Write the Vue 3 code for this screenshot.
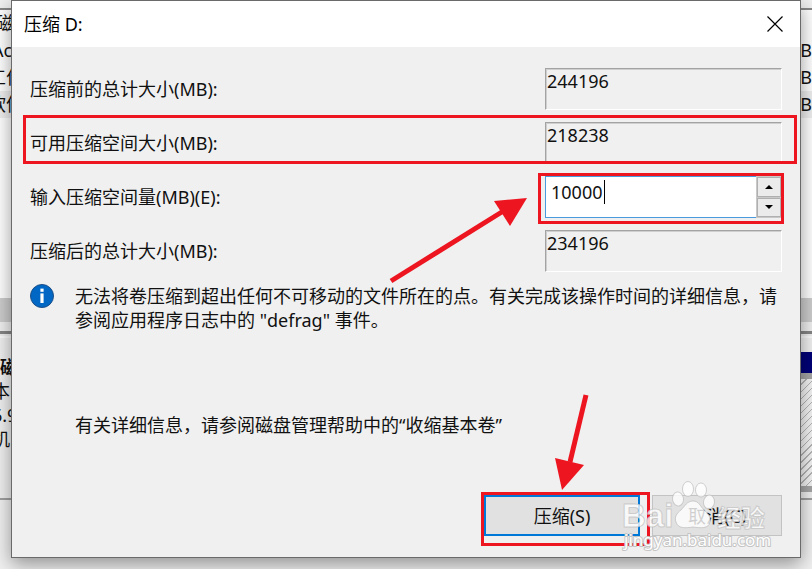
<script setup>
import { ref, computed } from 'vue'

const total = 244196
const available = 218238
const amount = ref('10000')
const remaining = computed(() => total - (Number(amount.value) || 0))

const step = (delta) => {
  const next = (Number(amount.value) || 0) + delta
  amount.value = String(Math.min(available, Math.max(0, next)))
}
</script>

<template>
  <div class="desktop">
    <div class="backdrop" aria-hidden="true">
      <div class="toolbar"></div>
      <div class="volumes">
        <div class="volume head"><span class="shift-s">磁</span></div>
        <div class="volume"><span class="shift-m">Ac</span><span>B</span></div>
        <div class="volume"><span class="shift-l">工作</span><span>B</span></div>
        <div class="volume picked"><span class="shift-l">软件</span><span>B</span></div>
      </div>
      <div class="scroll"></div>
      <div class="splitter"></div>
      <div class="disks">
        <div class="disk-info">
          <b>磁</b>
          <span class="shift-m">本</span>
          <span class="shift-m">6.9</span>
          <span class="shift-m">机</span>
        </div>
        <div class="disk-map">
          <div class="navy"></div>
          <div class="hatch"></div>
        </div>
      </div>
    </div>

    <main class="dialog" role="dialog" aria-labelledby="dialog-title">
      <header class="titlebar">
        <h1 id="dialog-title">压缩 D:</h1>
        <button class="close" type="button" aria-label="关闭">
          <svg width="16" height="16" viewBox="0 0 16 16">
            <path d="M0.5 0.5L15.5 15.5M15.5 0.5L0.5 15.5" stroke="#000" stroke-width="1.2" />
          </svg>
        </button>
      </header>

      <form class="content" @submit.prevent>
        <div class="fields">
          <div class="row">
            <label for="total">压缩前的总计大小(MB):</label>
            <output id="total" class="sunken">{{ total }}</output>
          </div>
          <div class="row">
            <label for="available">可用压缩空间大小(MB):</label>
            <output id="available" class="sunken">{{ available }}</output>
            <i class="mark mark-row"></i>
          </div>
          <div class="row">
            <label for="amount">输入压缩空间量(MB)(E):</label>
            <div class="spin">
              <div class="edit">
                <input id="amount" v-model="amount" type="text" inputmode="numeric" />
                <i class="caret"></i>
              </div>
              <div class="steps">
                <button type="button" aria-label="增加" @click="step(1)">
                  <svg width="8" height="4" viewBox="0 0 8 4"><path d="M0 4L4 0L8 4Z" /></svg>
                </button>
                <button type="button" aria-label="减少" @click="step(-1)">
                  <svg width="8" height="4" viewBox="0 0 8 4"><path d="M0 0L4 4L8 0Z" /></svg>
                </button>
              </div>
              <i class="mark mark-spin"></i>
            </div>
          </div>
          <div class="row">
            <label for="remaining">压缩后的总计大小(MB):</label>
            <output id="remaining" class="sunken">{{ remaining }}</output>
          </div>
        </div>

        <div class="notice">
          <svg class="info" width="24" height="24" viewBox="0 0 24 24">
            <circle cx="12" cy="12" r="11.5" fill="#0067c5" stroke="#1c4f87" />
            <rect x="10.4" y="4.6" width="3.2" height="3.2" fill="#fff" />
            <rect x="10.4" y="9.4" width="3.2" height="9.6" fill="#fff" />
          </svg>
          <p>无法将卷压缩到超出任何不可移动的文件所在的点。有关完成该操作时间的详细信息，请参阅应用程序日志中的 "defrag" 事件。</p>
        </div>

        <p class="more">有关详细信息，请参阅磁盘管理帮助中的“收缩基本卷”</p>

        <footer class="actions">
          <div class="primary">
            <button class="btn default" type="submit">压缩(S)</button>
            <i class="mark mark-button"></i>
          </div>
          <button class="btn cancel" type="button">取消(C)</button>
        </footer>
      </form>

      <svg class="arrow arrow-input" width="138" height="88" viewBox="0 0 138 88">
        <path d="M2 84L116 13" stroke="#ed1520" stroke-width="5" />
        <path d="M105 4L138 1L121 29Z" fill="#ed1520" />
      </svg>
      <svg class="arrow arrow-button" width="36" height="98" viewBox="0 0 36 98">
        <path d="M31 1L15 68" stroke="#ed1520" stroke-width="5" />
        <path d="M0 64L29 71L7 96Z" fill="#ed1520" />
      </svg>

      <svg class="watermark" width="160" height="76" viewBox="0 0 160 76">
        <g fill="#fff" fill-opacity="0.8" stroke="#b4b4b4" stroke-opacity="0.6" stroke-width="1">
          <text class="wm-name" x="4" y="47">Bai</text>
          <text class="wm-cjk" x="99" y="47">经验</text>
          <ellipse cx="70" cy="9" rx="5.5" ry="7.5" />
          <ellipse cx="83" cy="10" rx="5.5" ry="7" />
          <ellipse cx="60" cy="19" rx="5.5" ry="7" transform="rotate(-8 60 19)" />
          <ellipse cx="91" cy="22" rx="5.5" ry="7" transform="rotate(8 91 22)" />
          <path d="M75 21C69 21 67 26 63 30C59 33 56 37 58 42C60 49 68 48 75 47C82 48 91 49 92 42C93 37 90 34 86 30C82 26 81 21 75 21Z" />
        </g>
        <text class="wm-url" x="6" y="66">jingyan.baidu.com</text>
      </svg>
    </main>
  </div>
</template>

<style>
body {
  margin: 0;
  background: #f0f0f0;
}
</style>

<style scoped>
* {
  box-sizing: border-box;
}
.desktop {
  position: relative;
  min-height: 100vh;
  padding: 0 11px 11px;
  overflow: hidden;
  background: #f0f0f0;
  color: #111;
  font: 18px/24px "Noto Sans", "Noto Sans CJK SC", sans-serif;
}
.backdrop {
  position: absolute;
  inset: 0;
  display: flex;
  flex-direction: column;
}
.toolbar {
  height: 10px;
  border-bottom: 2px solid #888;
}
.volumes {
  height: 288px;
  background: #fff;
}
.volume {
  display: flex;
  justify-content: space-between;
  height: 27px;
  line-height: 26px;
  white-space: nowrap;
}
.picked {
  background: #efefef;
}
.shift-s {
  margin-left: -4px;
}
.shift-m {
  margin-left: -8px;
}
.shift-l {
  margin-left: -12px;
}
.scroll {
  height: 24px;
  background: #cdcdcd;
}
.splitter {
  height: 12px;
  border-bottom: 3px solid #858585;
}
.disks {
  display: flex;
  justify-content: space-between;
  height: 164px;
  margin-top: 2px;
  padding-top: 14px;
  border-top: 2px solid #fafafa;
  border-bottom: 2px solid #a0a0a0;
}
.disk-info {
  display: flex;
  flex-direction: column;
  padding-top: 3px;
}
.disk-map {
  width: 40px;
}
.navy {
  height: 27px;
  border-bottom: 6px solid #a6a6a6;
  background: #000078;
}
.hatch {
  height: 113px;
  border-bottom: 6px solid #a6a6a6;
  background: repeating-linear-gradient(135deg, #f4f4f4 0 4px, #b4b4b4 4px 5px);
}
.dialog {
  position: relative;
  display: flex;
  flex-direction: column;
  min-height: calc(100vh - 11px);
  border: 1px solid #6a6a6a;
  background: #f0f0f0;
  box-shadow: 0 6px 18px rgba(0, 0, 0, 0.4);
}
.titlebar {
  display: flex;
  align-items: center;
  justify-content: space-between;
  height: 46px;
  padding: 0 17px 0 12px;
  background: #fff;
}
h1 {
  margin: 0;
  color: #000;
  font-size: 18px;
  font-weight: 400;
}
button {
  padding: 0;
  border: 0;
  color: inherit;
  font: inherit;
}
.close {
  display: flex;
  background: none;
}
.content {
  display: flex;
  flex: 1;
  flex-direction: column;
  padding: 21px 18px 21px;
}
.fields {
  display: grid;
  gap: 12px;
}
.row {
  position: relative;
  display: grid;
  grid-template-columns: 1fr 237px;
  align-items: center;
  height: 42px;
}
.sunken {
  height: 42px;
  border: 1px solid;
  border-color: #a3a3a3 #fff #fff #a3a3a3;
  box-shadow: inset 1px 1px #cfcfcf;
  padding-left: 1px;
}
.spin {
  position: relative;
  display: flex;
  height: 42px;
}
.edit {
  position: relative;
  flex: 1;
  border: 1px solid #4a9ade;
  border-right: 0;
  background: #fff;
}
.edit input {
  width: 100%;
  height: 30px;
  padding: 0 5px;
  border: 0;
  outline: 0;
  background: none;
  color: inherit;
  font: inherit;
}
.caret {
  position: absolute;
  top: 3px;
  left: 58px;
  width: 1px;
  height: 24px;
  background: #000;
}
.steps {
  display: grid;
  gap: 1px;
  width: 26px;
  padding: 1px;
  background: #c8c8c8;
}
.steps button {
  display: flex;
  align-items: center;
  justify-content: center;
  border: 1px solid #b0b0b0;
  background: #ebebeb;
}
.mark {
  position: absolute;
  border: 3px solid #ed1520;
  pointer-events: none;
}
.mark-row {
  inset: -7px -15px 0 -7px;
}
.mark-spin {
  inset: -3px -2px -6px -7px;
}
.mark-button {
  inset: -3px -10px -10px -3px;
}
.notice {
  display: flex;
  gap: 21px;
  margin-top: 12px;
}
.info {
  flex: none;
}
p {
  margin: 0;
}
.more {
  margin: 81px 0 0 45px;
}
.actions {
  display: flex;
  justify-content: flex-end;
  gap: 12px;
  margin-top: auto;
}
.primary {
  position: relative;
}
.btn {
  width: 130px;
  height: 41px;
  border: 1px solid #c3c3c3;
  background: #e1e1e1;
}
.default {
  width: 156px;
  border: 2px solid #0078d7;
}
.arrow {
  position: absolute;
  pointer-events: none;
}
.arrow-input {
  top: 196px;
  left: 377px;
}
.arrow-button {
  right: 209px;
  bottom: 65px;
}
.watermark {
  position: absolute;
  right: 22px;
  bottom: 1px;
  pointer-events: none;
}
.wm-name {
  font: 700 33px "Liberation Sans", sans-serif;
}
.wm-cjk {
  font: 700 24px "Noto Sans CJK SC", sans-serif;
}
.wm-url {
  fill: #fff;
  stroke: #c4c4c4;
  stroke-width: 2px;
  paint-order: stroke;
  font: 400 17px "Noto Sans", sans-serif;
}
</style>
